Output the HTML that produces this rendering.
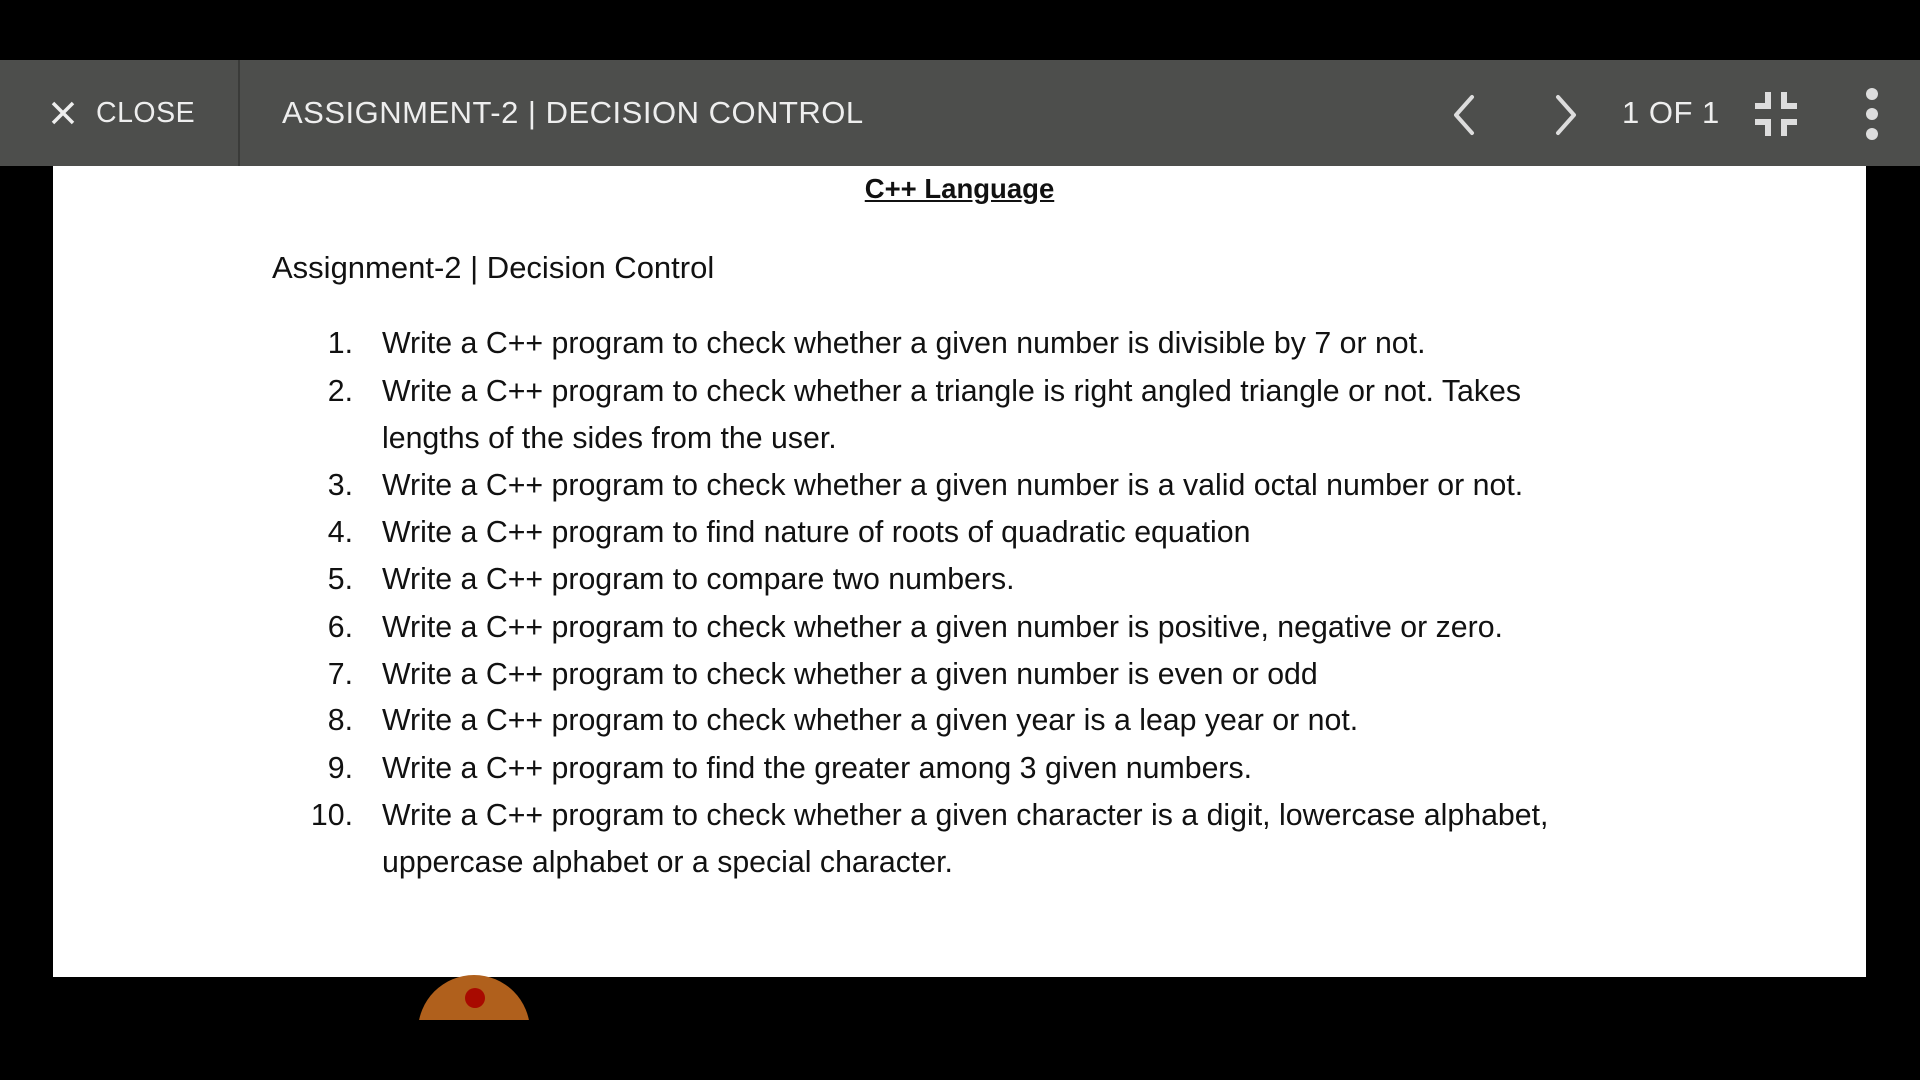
<!DOCTYPE html>
<html><head><meta charset="utf-8"><style>
html,body{margin:0;width:1920px;height:1080px;overflow:hidden;}
body{background:#000;position:relative;font-family:"Liberation Sans",sans-serif;}
.bar{position:absolute;left:0;top:60px;width:1920px;height:106px;background:#4d4e4c;color:#eee;}
.bar .t{position:absolute;top:0;line-height:106px;font-size:31px;letter-spacing:0.5px;}
.div{position:absolute;left:238px;top:0;width:2px;height:106px;background:#3a3b39;}
.page{position:absolute;left:53px;top:166px;width:1813px;height:811px;background:#fff;color:#111;}
.h{position:absolute;left:0;width:100%;top:7px;text-align:center;font-weight:bold;text-decoration:underline;font-size:27.5px;}
.sub{position:absolute;left:219px;top:84px;font-size:31px;}
.li{position:absolute;font-size:30.3px;white-space:nowrap;}
.n{position:absolute;width:60px;text-align:right;left:240px;}
.x{position:absolute;left:329px;}
.cwrap{position:absolute;left:410px;top:970px;width:130px;height:50px;overflow:hidden;}
.circ{position:absolute;left:8px;top:5px;width:112px;height:112px;border-radius:50%;background:#b0601c;}
.dot{position:absolute;left:55px;top:18px;width:20px;height:20px;border-radius:50%;background:#a80a00;}
</style></head><body>
<div class="bar">
<svg style="position:absolute;left:50px;top:40px" width="26" height="26" viewBox="0 0 26 26"><path d="M3 3L23 23M23 3L3 23" stroke="#eee" stroke-width="3.5"/></svg>
<div class="t" style="left:96px;font-size:28.5px">CLOSE</div>
<div class="div"></div>
<div class="t" style="left:282px">ASSIGNMENT-2 | DECISION CONTROL</div>
<svg style="position:absolute;left:1446px;top:33px" width="40" height="44" viewBox="0 0 40 44"><path d="M26 4L10 22L26 40" fill="none" stroke="#ddd" stroke-width="4" stroke-linecap="round" stroke-linejoin="round"/></svg>
<svg style="position:absolute;left:1550px;top:33px" width="40" height="44" viewBox="0 0 40 44"><path d="M8 4L24 22L8 40" fill="none" stroke="#ddd" stroke-width="4" stroke-linecap="round" stroke-linejoin="round"/></svg>
<div class="t" style="left:1622px">1 OF 1</div>
<svg style="position:absolute;left:1752px;top:30px" width="48" height="48" viewBox="0 0 48 48"><path d="M16 2V16H3M32 2V16H45M16 46V32H3M32 46V32H45" fill="none" stroke="#ddd" stroke-width="6"/></svg>
<svg style="position:absolute;left:1860px;top:28px" width="24" height="52" viewBox="0 0 24 52"><circle cx="12" cy="6" r="6" fill="#ddd"/><circle cx="12" cy="26" r="6" fill="#ddd"/><circle cx="12" cy="46" r="6" fill="#ddd"/></svg>
</div>
<div class="page">
<div class="h">C++ Language</div>
<div class="sub">Assignment-2 | Decision Control</div>
<div class="li" style="top:161px"><span class="n">1.</span><span class="x">Write a C++ program to check whether a given number is divisible by 7 or not.</span></div>
<div class="li" style="top:209px"><span class="n">2.</span><span class="x">Write a C++ program to check whether a triangle is right angled triangle or not. Takes</span></div>
<div class="li" style="top:256px"><span class="x">lengths of the sides from the user.</span></div>
<div class="li" style="top:303px"><span class="n">3.</span><span class="x">Write a C++ program to check whether a given number is a valid octal number or not.</span></div>
<div class="li" style="top:350px"><span class="n">4.</span><span class="x">Write a C++ program to find nature of roots of quadratic equation</span></div>
<div class="li" style="top:397px"><span class="n">5.</span><span class="x">Write a C++ program to compare two numbers.</span></div>
<div class="li" style="top:445px"><span class="n">6.</span><span class="x">Write a C++ program to check whether a given number is positive, negative or zero.</span></div>
<div class="li" style="top:492px"><span class="n">7.</span><span class="x">Write a C++ program to check whether a given number is even or odd</span></div>
<div class="li" style="top:538px"><span class="n">8.</span><span class="x">Write a C++ program to check whether a given year is a leap year or not.</span></div>
<div class="li" style="top:586px"><span class="n">9.</span><span class="x">Write a C++ program to find the greater among 3 given numbers.</span></div>
<div class="li" style="top:633px"><span class="n">10.</span><span class="x">Write a C++ program to check whether a given character is a digit, lowercase alphabet,</span></div>
<div class="li" style="top:680px"><span class="x">uppercase alphabet or a special character.</span></div>
</div>
<div class="cwrap"><div class="circ"></div><div class="dot"></div></div>
</body></html>
